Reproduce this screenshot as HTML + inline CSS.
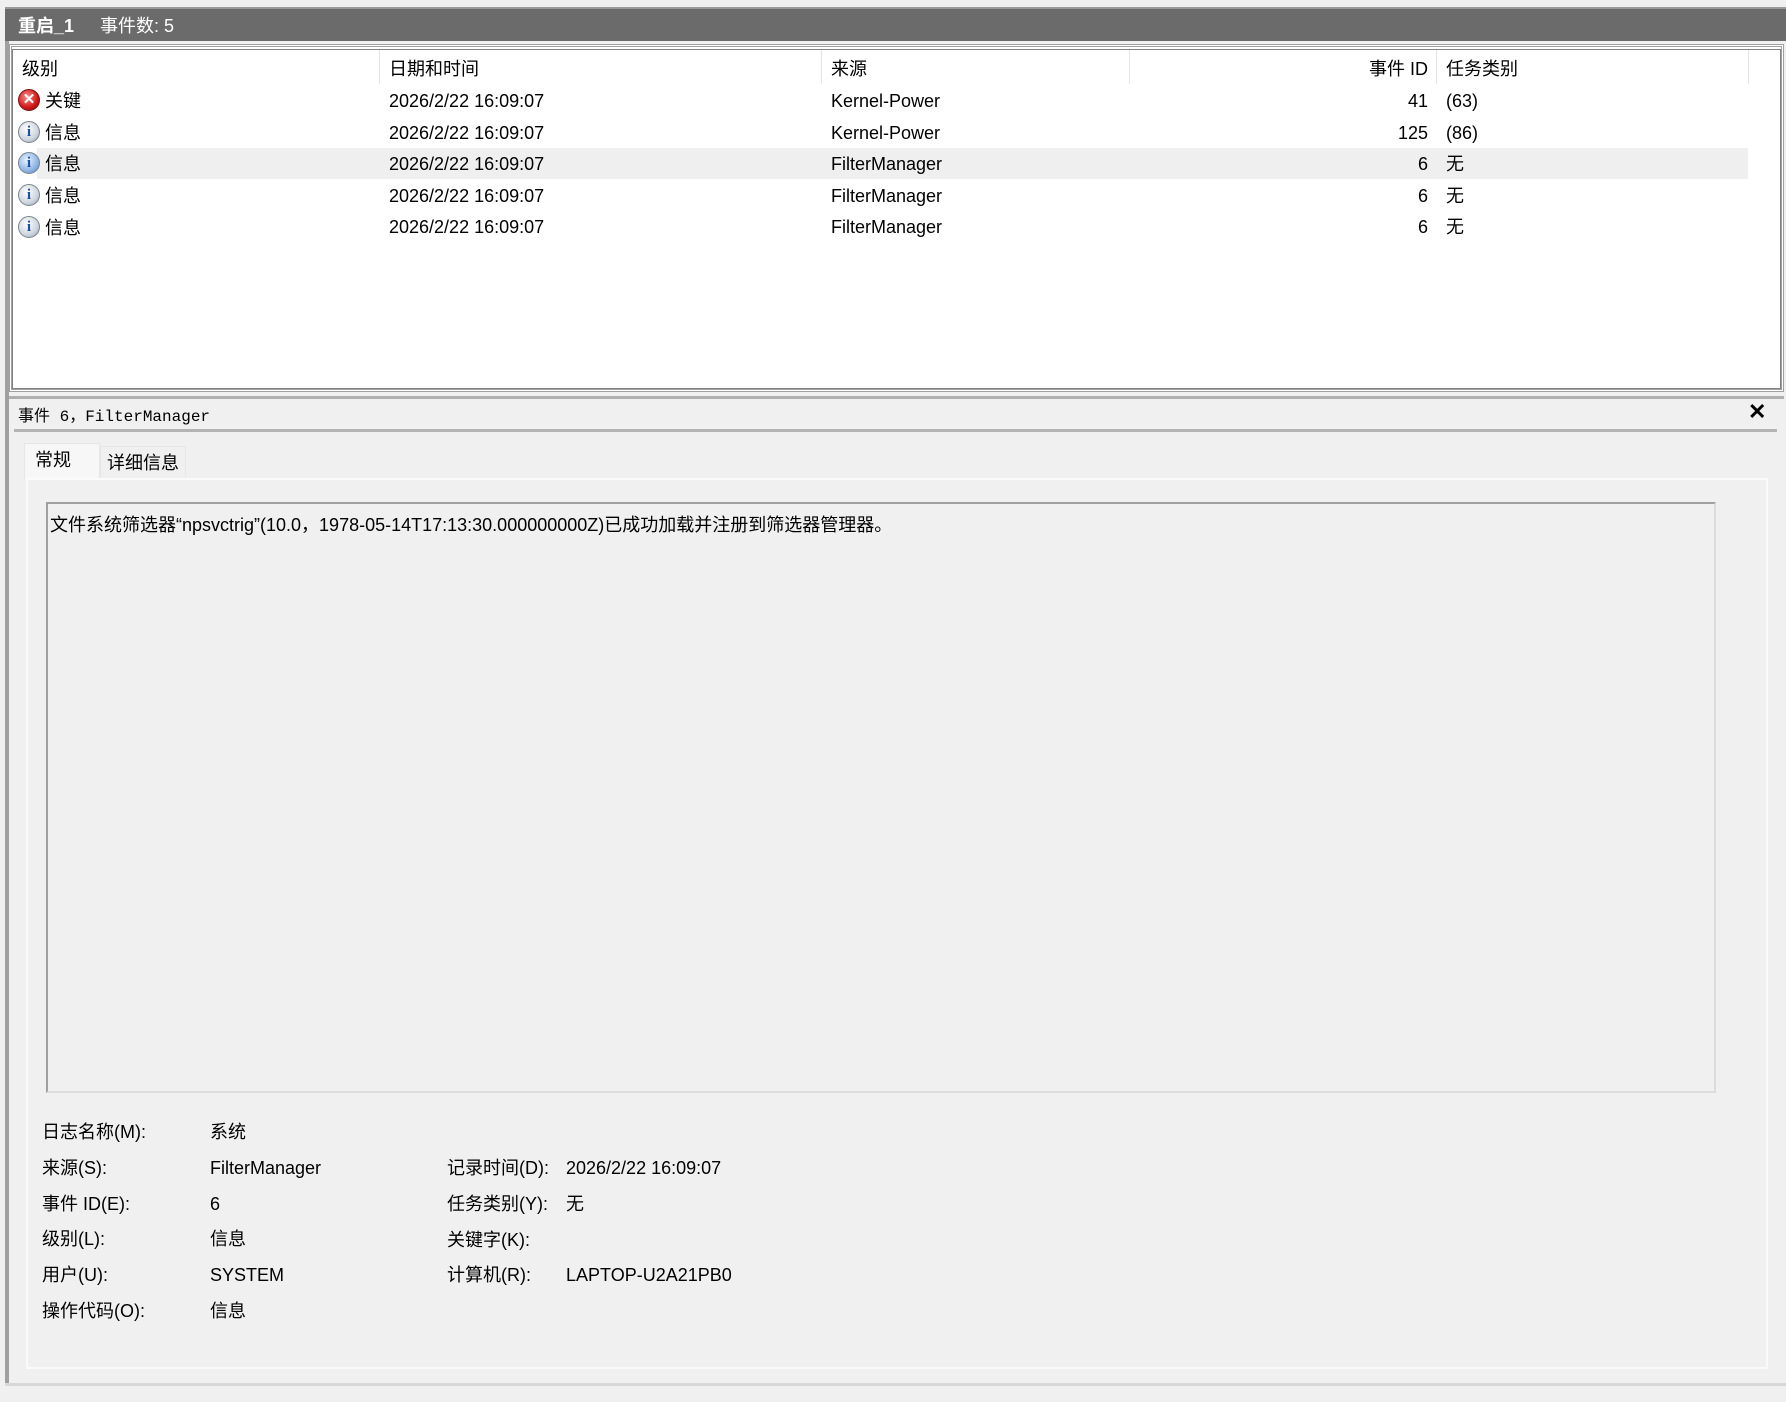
<!DOCTYPE html>
<html><head><meta charset="utf-8"><style>
*{margin:0;padding:0;box-sizing:border-box}
body{width:1786px;height:1402px;background:#f0f0f0;position:relative;overflow:hidden;font-family:"Liberation Sans","Noto Sans CJK SC",sans-serif;font-size:18px;color:#000}
.a{position:absolute;white-space:nowrap}
.ic{position:absolute;width:22px;height:22px;border-radius:50%}
.info{background:radial-gradient(circle at 40% 35%,#fff,#cfd6de 60%,#8a96a3);border:1px solid #7a8590;color:#1c4fa8;font:bold 15px "Liberation Serif",serif;text-align:center;line-height:20px}
.info.b{background:radial-gradient(circle at 40% 35%,#e8f2ff,#8fb6e4 60%,#4d7fbf)}
.err{background:radial-gradient(circle at 40% 35%,#ff8a8a,#d01818 60%,#8a0000);border:1px solid #7a1010;color:#fff;font:bold 15px "Liberation Sans",sans-serif;text-align:center;line-height:20px}
</style></head><body>
<div class="a" style="left:5px;top:7px;width:1781px;height:34px;background:#6b6b6b;border-top:2px solid #9a9a9a"></div>
<div class="a" style="left:18px;top:12px;color:#fff;font-weight:bold">重启_1</div>
<div class="a" style="left:100px;top:12px;color:#fff">事件数: 5</div>
<div class="a" style="left:5px;top:41px;width:4px;height:1343px;background:#a0a0a0"></div>
<div class="a" style="left:9px;top:44px;width:1775px;height:348px;border:3px double #a0a0a0;background:#fff"></div>
<div class="a" style="left:12px;top:49px;width:1769px;height:340px;border:1px solid #828282;background:#fff"></div>
<div class="a" style="left:379px;top:50px;width:1px;height:34px;background:#e5e5e5"></div>
<div class="a" style="left:821px;top:50px;width:1px;height:34px;background:#e5e5e5"></div>
<div class="a" style="left:1129px;top:50px;width:1px;height:34px;background:#e5e5e5"></div>
<div class="a" style="left:1436px;top:50px;width:1px;height:34px;background:#e5e5e5"></div>
<div class="a" style="left:1748px;top:50px;width:1px;height:34px;background:#e5e5e5"></div>
<div class="a" style="left:22px;top:55px">级别</div>
<div class="a" style="left:389px;top:55px">日期和时间</div>
<div class="a" style="left:831px;top:55px">来源</div>
<div class="a" style="left:1300px;top:55px;width:128px;text-align:right">事件 ID</div>
<div class="a" style="left:1446px;top:55px">任务类别</div>
<div class="a" style="left:37px;top:148px;width:1711px;height:31px;background:#efefef"></div>
<div class="ic err" style="left:18px;top:89px">✕</div>
<div class="ic info" style="left:18px;top:121px">i</div>
<div class="ic info b" style="left:18px;top:152px">i</div>
<div class="ic info" style="left:18px;top:184px">i</div>
<div class="ic info" style="left:18px;top:216px">i</div>
<div class="a" style="left:45px;top:87px">关键</div>
<div class="a" style="left:45px;top:119px">信息</div>
<div class="a" style="left:45px;top:150px">信息</div>
<div class="a" style="left:45px;top:182px">信息</div>
<div class="a" style="left:45px;top:214px">信息</div>
<div class="a" style="left:389px;top:86px;line-height:31.6px">2026/2/22 16:09:07<br>2026/2/22 16:09:07<br>2026/2/22 16:09:07<br>2026/2/22 16:09:07<br>2026/2/22 16:09:07</div>
<div class="a" style="left:831px;top:86px;line-height:31.6px">Kernel-Power<br>Kernel-Power<br>FilterManager<br>FilterManager<br>FilterManager</div>
<div class="a" style="left:1300px;top:86px;width:128px;text-align:right;line-height:31.6px">41<br>125<br>6<br>6<br>6</div>
<div class="a" style="left:1446px;top:86px;line-height:31.6px">(63)<br>(86)<br>无<br>无<br>无</div>
<div class="a" style="left:9px;top:396px;width:1775px;height:3px;background:#b0b0b0"></div>
<div class="a" style="left:18px;top:402px;font-family:'Liberation Mono','Noto Sans CJK SC',monospace;font-size:16px">事件 6，FilterManager</div>
<div class="a" style="left:1748px;top:399px;font-weight:bold;font-size:22px">✕</div>
<div class="a" style="left:14px;top:429px;width:1763px;height:3px;background:#b4b4b4"></div>
<div class="a" style="left:24px;top:443px;width:76px;height:36px;background:#f7f7f7;border:1px solid #e6e6e6;border-bottom:none"></div>
<div class="a" style="left:100px;top:446px;width:86px;height:31px;background:#f0f0f0;border:1px solid #e6e6e6;border-bottom:none"></div>
<div class="a" style="left:35px;top:446px">常规</div>
<div class="a" style="left:107px;top:449px">详细信息</div>
<div class="a" style="left:26px;top:478px;width:1742px;height:891px;border:2px solid #fafafa;background:#f0f0f0"></div>
<div class="a" style="left:46px;top:502px;width:1670px;height:591px;border:2px solid #a0a0a0;border-right:2px solid #dcdcdc;border-bottom:2px solid #dcdcdc;background:#f0f0f0"></div>
<div class="a" style="left:50px;top:511px">文件系统筛选器“npsvctrig”(10.0，1978-05-14T17:13:30.000000000Z)已成功加载并注册到筛选器管理器。</div>
<div class="a" style="left:42px;top:1115px;line-height:35.8px">日志名称(M):<br>来源(S):<br>事件 ID(E):<br>级别(L):<br>用户(U):<br>操作代码(O):</div>
<div class="a" style="left:210px;top:1115px;line-height:35.8px">系统<br>FilterManager<br>6<br>信息<br>SYSTEM<br>信息</div>
<div class="a" style="left:447px;top:1151px;line-height:35.8px">记录时间(D):<br>任务类别(Y):<br>关键字(K):<br>计算机(R):</div>
<div class="a" style="left:566px;top:1151px;line-height:35.8px">2026/2/22 16:09:07<br>无<br><br>LAPTOP-U2A21PB0</div>
<div class="a" style="left:5px;top:1383px;width:1781px;height:3px;background:#d8d8d8"></div>
</body></html>
